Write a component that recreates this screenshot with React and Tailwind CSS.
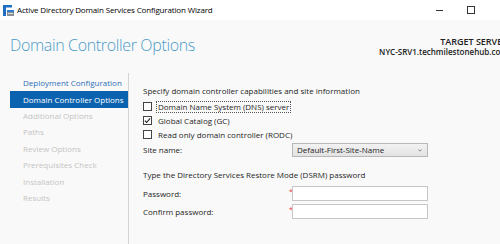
export default function App() {
  const nav = [
    { label: "Deployment Configuration", state: "link" },
    { label: "Domain Controller Options", state: "active" },
    { label: "Additional Options", state: "off" },
    { label: "Paths", state: "off" },
    { label: "Review Options", state: "off" },
    { label: "Prerequisites Check", state: "off" },
    { label: "Installation", state: "off" },
    { label: "Results", state: "off" },
  ];
  return (
    <div className="w-[500px] h-[244px] overflow-hidden bg-[#f9f9f9] flex flex-col text-[#1e1e1e]" style={{ fontFamily: '"Open Sans", "Noto Sans", sans-serif' }}>
      {/* title bar */}
      <div className="h-[20px] shrink-0 bg-white flex items-center">
        <svg className="ml-[3px] w-[11px] h-[11px]" viewBox="0 0 11 11">
          <rect x="0" y="0" width="3" height="11" fill="#1f6fc5" />
          <rect x="0" y="0" width="9" height="2.5" fill="#1f6fc5" />
          <rect x="4" y="5" width="7" height="6" fill="#8a8f96" />
          <rect x="4" y="5" width="7" height="2" fill="#2f7fd0" />
          <rect x="5" y="8" width="5" height="1" fill="#d9dde2" />
        </svg>
        <span className="ml-[3px] text-[8px] text-black leading-none tracking-[-0.15px]">Active Directory Domain Services Configuration Wizard</span>
        <div className="ml-auto flex items-center mr-[25px]">
          <div className="w-[7px] h-px bg-[#333]" />
          <div className="ml-[24px] w-[8px] h-[8px] border border-[#333]" />
        </div>
      </div>
      {/* header */}
      <div className="h-[53px] shrink-0 flex justify-between">
        <div className="pl-[10px] pt-[15px] text-[16px] font-light text-[#4a9bc8] leading-[20px] tracking-[-0.35px]">Domain Controller Options</div>
        <div className="mr-[-8px] pt-[16px] flex flex-col items-end text-[#222]">
          <div className="font-semibold text-[9px] leading-[11px] whitespace-nowrap">TARGET SERVER</div>
          <div className="font-semibold text-[8px] leading-[10px] whitespace-nowrap">NYC-SRV1.techmilestonehub.com</div>
        </div>
      </div>
      {/* body */}
      <div className="flex flex-1 min-h-0">
        <div className="w-[129px] shrink-0 border-r border-[#d4d4d4] pl-[10px] pt-[2px]">
          {nav.map((n) => (
            <div
              key={n.label}
              className={
                n.state === "active"
                  ? "h-[16.4px] flex items-center pl-[13px] text-[8px] bg-[#0b63b0] text-white whitespace-nowrap"
                  : n.state === "link"
                  ? "h-[16.4px] flex items-center pl-[13px] text-[8px] text-[#2e6fb8] whitespace-nowrap"
                  : "h-[16.4px] flex items-center pl-[13px] text-[8px] text-[#c4c4c4] whitespace-nowrap"
              }
            >
              {n.label}
            </div>
          ))}
        </div>
        <div className="flex-1 pl-[14px] pt-[13px] text-[8px] leading-none">
          <div className="h-[10px] flex items-center">Specify domain controller capabilities and site information</div>
          <div className="mt-[6px] flex flex-col gap-[5px]">
            <div className="h-[9px] flex items-center">
              <div className="w-[9px] h-[9px] border border-[#444] bg-white" />
              <span className="ml-[4px] px-[1px] py-[1px] border border-dotted border-[#555]">Domain Name System (DNS) server</span>
            </div>
            <div className="h-[9px] flex items-center">
              <div className="w-[9px] h-[9px] border border-[#444] bg-white flex items-center justify-center">
                <svg viewBox="0 0 8 8" className="w-[7px] h-[7px]"><path d="M1 4.2 L3 6.3 L7 1.5" fill="none" stroke="#222" strokeWidth="1.3" /></svg>
              </div>
              <span className="ml-[5px] px-[1px]">Global Catalog (GC)</span>
            </div>
            <div className="h-[9px] flex items-center">
              <div className="w-[9px] h-[9px] border border-[#444] bg-white" />
              <span className="ml-[5px] px-[1px]">Read only domain controller (RODC)</span>
            </div>
          </div>
          <div className="mt-[4px] flex items-center h-[14px]">
            <span className="w-[149px] shrink-0">Site name:</span>
            <div className="w-[136px] h-[14px] border border-[#b8b8b8] bg-gradient-to-b from-[#f2f2f2] to-[#e3e3e3] flex items-center pl-[4px] pr-[5px]">
              <span>Default-First-Site-Name</span>
              <svg viewBox="0 0 6 4" className="ml-auto w-[4px] h-[3px]"><path d="M0.5 0.5 L3 3 L5.5 0.5" fill="none" stroke="#555" strokeWidth="1" /></svg>
            </div>
          </div>
          <div className="mt-[13px] h-[10px] flex items-center">Type the Directory Services Restore Mode (DSRM) password</div>
          <div className="mt-[6px] flex items-center h-[15px]">
            <span className="w-[146px] shrink-0">Password:</span>
            <span className="w-[3px] self-start text-[#e33] text-[7px] leading-none mt-[2px]">*</span>
            <div className="w-[136px] h-[15px] border border-[#c6c6c6] bg-white" />
          </div>
          <div className="mt-[3px] flex items-center h-[15px]">
            <span className="w-[146px] shrink-0">Confirm password:</span>
            <span className="w-[3px] self-start text-[#e33] text-[7px] leading-none mt-[2px]">*</span>
            <div className="w-[136px] h-[15px] border border-[#c6c6c6] bg-white" />
          </div>
        </div>
      </div>
    </div>
  );
}
